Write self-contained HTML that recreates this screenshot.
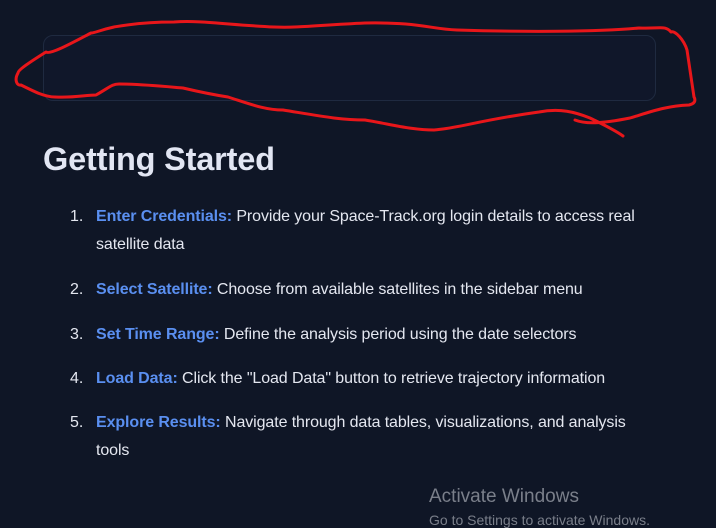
<!DOCTYPE html>
<html><head><meta charset="utf-8"><style>
html,body{margin:0;padding:0;width:716px;height:521px;overflow:hidden;background:#0f1626;font-family:"Liberation Sans",sans-serif;}
.box{position:absolute;left:43px;top:35px;width:611px;height:64px;border:1px solid #1f2a40;border-radius:10px;background:#10172a;}
h1{position:absolute;left:43px;top:141px;margin:0;font-size:32.5px;font-weight:bold;color:#e2e6f3;letter-spacing:-0.2px;}
.l{position:absolute;left:96px;font-size:16px;color:#e4e7f0;white-space:nowrap;letter-spacing:-0.1px;line-height:20px;}
.n{position:absolute;left:70px;font-size:16px;color:#e4e7f0;line-height:20px;}
.b{color:#5a8ff0;font-weight:bold;}
.w{position:absolute;left:429px;top:486px;font-size:19px;color:#7a7f8a;}
.w2{position:absolute;left:429px;top:512px;font-size:14px;color:#7a7f8a;}
</style></head><body>
<div class="box"></div>
<h1>Getting Started</h1>
<div class="n" style="top:207px">1.</div><div class="l" style="top:207px"><span class="b">Enter Credentials:</span> Provide your Space-Track.org login details to access real</div>
<div class="l" style="top:235px">satellite data</div>
<div class="n" style="top:280px">2.</div><div class="l" style="top:280px"><span class="b">Select Satellite:</span> Choose from available satellites in the sidebar menu</div>
<div class="n" style="top:325px">3.</div><div class="l" style="top:325px"><span class="b">Set Time Range:</span> Define the analysis period using the date selectors</div>
<div class="n" style="top:369px">4.</div><div class="l" style="top:369px"><span class="b">Load Data:</span> Click the "Load Data" button to retrieve trajectory information</div>
<div class="n" style="top:413px">5.</div><div class="l" style="top:413px"><span class="b">Explore Results:</span> Navigate through data tables, visualizations, and analysis</div>
<div class="l" style="top:441px">tools</div>
<div class="w">Activate Windows</div>
<div class="w2">Go to Settings to activate Windows.</div>
<svg width="716" height="521" style="position:absolute;left:0;top:0" viewBox="0 0 716 521">
<path d="M575,120 C585,124 600,124 630,118 C650,112 665,106 689,105 C698,103 694,97 694,97 L687,50 C684,40 675,30 671,32 C665,25 660,29 639,28 C600,32 520,32 457,30 C430,29 420,22 365,23 C320,25 300,28 274,27 C230,25 200,20 174,22 C140,22 120,26 114,27 C100,30 95,33 91,33 C70,44 50,55 46,52 C30,62 18,70 18,73 C14,80 17,86 21,85 C35,92 45,97 55,97 C75,98 85,95 96,95 C110,87 112,84 119,84 C140,84 160,86 183,88 C200,92 215,95 228,97 C250,104 265,110 283,110 C320,116 340,120 365,120 C390,124 410,130 434,130 C460,128 480,120 539,112 C560,108 575,112 590,118 C600,123 615,130 623,136" fill="none" stroke="#e8161a" stroke-width="3" stroke-linecap="round" stroke-linejoin="round"/>
</svg>
</body></html>
